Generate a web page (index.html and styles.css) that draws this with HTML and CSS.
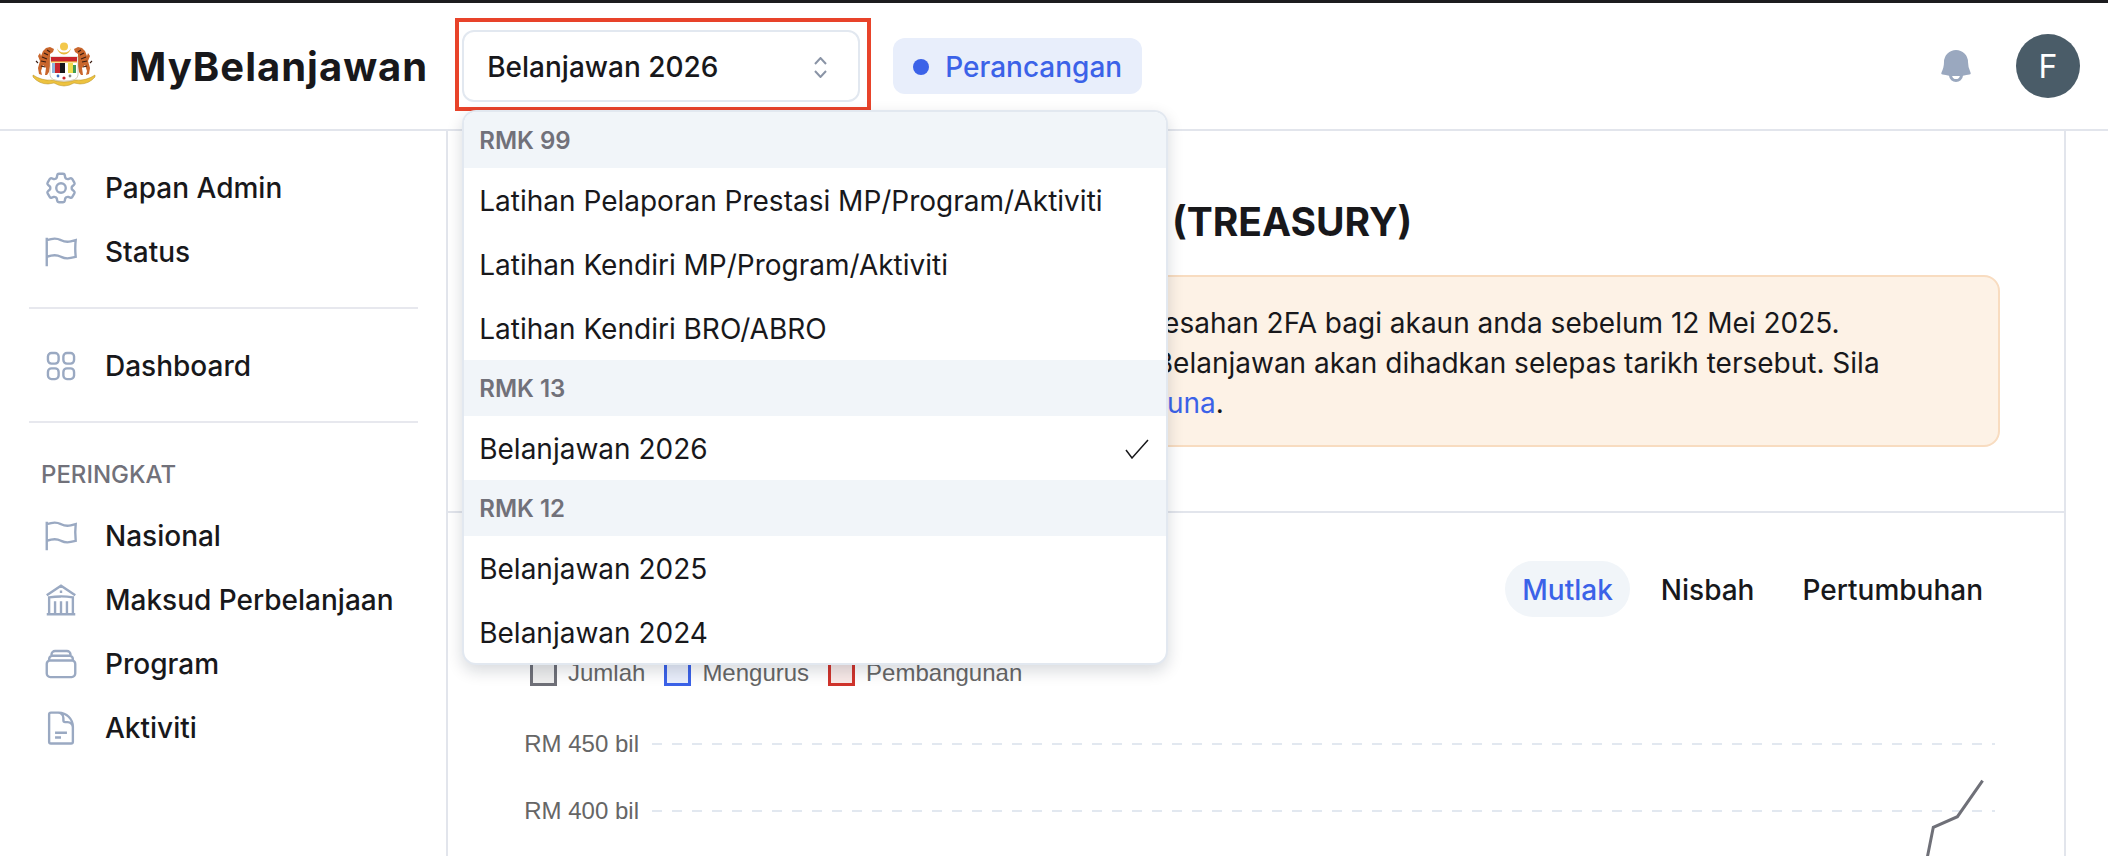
FILE: index.html
```html
<!DOCTYPE html>
<html>
  <head>
    <title>MyBelanjawan</title>
    <link rel="stylesheet" href="styles.css">
  </head>
  <body>
    <header class="topbar">
      <svg class="crest" viewBox="0 0 64 48">
        <defs>
          <g id="tiger">
            <path d="M18 5l4 2-1 3-3 2 0 4 2 3-2 5-1 6-2 3-2 0 1-7-3-3-2 6 1 4-3-1-1-6 2-7-2-5 2-3 1 3 2-5 3-3z" fill="#c9662c"/>
            <path d="M15 8l3 2M12 11l4 2M10 15l5 2M9 19l5 1M9 24l4 1M4 19l2 2" stroke="#3a1d12" stroke-width="1.100" fill="none"/>
          </g>
        </defs>
        <use href="#tiger"/>
        <use href="#tiger" transform="translate(64) scale(-1 1)"/>
        <circle cx="32" cy="4.500" r="4" fill="#f3c84b"/>
        <path d="M25 5a7 7.500 0 0014 0a7 5.500 0 01-14 0z" fill="#e8b93a"/>
        <path d="M18 15h28v18q0 6-14 6t-14-6z" fill="#fff" stroke="#b9a98a" stroke-width=".6"/>
        <rect x="19" y="15" width="26" height="5" fill="#c9252c"/>
        <path d="M19 20h26" stroke="#f3c84b" stroke-width="1.200"/>
        <rect x="20" y="21" width="3" height="10" fill="#8fb6dc"/>
        <rect x="23" y="21" width="5" height="10" fill="#c9252c"/>
        <rect x="28" y="21" width="5" height="10" fill="#17171a"/>
        <rect x="36" y="21" width="5" height="10" fill="#f1dc4e"/>
        <rect x="41" y="23" width="3" height="8" fill="#3f9a55"/>
        <circle cx="26" cy="34" r="1.400" fill="#3d6fc0"/>
        <circle cx="32" cy="36" r="1.600" fill="#c9252c"/>
        <circle cx="38" cy="34" r="1.400" fill="#8a8a80"/>
        <path d="M1 33q9 6 19 5q12 4 24 0q10 1 19-5l0 2q-6 7-15 7l-6-1q-10 6-20 0l-6 1q-9 0-15-7z" fill="#edc23f" stroke="#b58c1d" stroke-width=".5"/>
      </svg>
      <div class="brand">MyBelanjawan</div>

      <div class="select">
        <span>Belanjawan 2026</span>
        <svg class="updown" viewBox="0 0 13 21">
          <path d="M1 7l5.500-6 5.500 6M1 14l5.500 6 5.500-6"/>
        </svg>
        <div class="highlight"></div>
        <div class="menu">
          <div class="menu-group">RMK 99</div>
          <div class="menu-item">Latihan Pelaporan Prestasi MP/Program/Aktiviti</div>
          <div class="menu-item">Latihan Kendiri MP/Program/Aktiviti</div>
          <div class="menu-item">Latihan Kendiri BRO/ABRO</div>
          <div class="menu-group">RMK 13</div>
          <div class="menu-item">
            Belanjawan 2026
            <svg class="check" viewBox="0 0 24 20"><path d="M1 11l6 8L23 1"/></svg>
          </div>
          <div class="menu-group">RMK 12</div>
          <div class="menu-item">Belanjawan 2025</div>
          <div class="menu-item">Belanjawan 2024</div>
        </div>
      </div>

      <div class="badge"><i class="dot"></i>Perancangan</div>

      <svg class="bell" viewBox="0 0 20 20">
        <path d="M10 2a6 6 0 00-6 6c0 1.887-.454 3.665-1.257 5.234a.75.75 0 00.515 1.076 32.91 32.91 0 003.256.508 3.500 3.500 0 006.972 0 32.903 32.903 0 003.256-.508.75.75 0 00.515-1.076A11.448 11.448 0 0116 8a6 6 0 00-6-6zM8.050 14.943a33.540 33.540 0 003.900 0 2 2 0 01-3.900 0z"/>
      </svg>
      <div class="avatar">F</div>
    </header>

    <div class="layout">
      <nav class="sidebar">
        <a class="nav-item">
          <svg viewBox="0 0 24 24"><path d="M9.594 3.940c.090-.542.560-.940 1.110-.940h2.593c.550 0 1.020.398 1.110.940l.213 1.281c.063.374.313.686.645.870.074.040.147.083.220.127.324.196.720.257 1.075.124l1.217-.456a1.125 1.125 0 011.370.490l1.296 2.247a1.125 1.125 0 01-.260 1.431l-1.003.827c-.293.240-.438.613-.431.992a6.759 6.759 0 010 .255c-.007.378.138.750.430.990l1.005.828c.424.350.534.954.260 1.430l-1.298 2.247a1.125 1.125 0 01-1.369.491l-1.217-.456c-.355-.133-.750-.072-1.076.124a6.570 6.570 0 01-.220.128c-.331.183-.581.495-.644.869l-.213 1.280c-.090.543-.560.941-1.110.941h-2.594c-.550 0-1.020-.398-1.110-.940l-.213-1.281c-.062-.374-.312-.686-.644-.870a6.520 6.520 0 01-.220-.127c-.325-.196-.720-.257-1.076-.124l-1.217.456a1.125 1.125 0 01-1.369-.490l-1.297-2.247a1.125 1.125 0 01.260-1.431l1.004-.827c.292-.240.437-.613.430-.992a6.932 6.932 0 010-.255c.007-.378-.138-.750-.430-.990l-1.004-.828a1.125 1.125 0 01-.260-1.430l1.297-2.247a1.125 1.125 0 011.370-.491l1.216.456c.356.133.751.072 1.076-.124.072-.044.146-.087.220-.128.332-.183.582-.495.644-.869l.214-1.281z"/><path d="M15 12a3 3 0 11-6 0 3 3 0 016 0z"/></svg>
          Papan Admin
        </a>
        <a class="nav-item">
          <svg viewBox="0 0 24 24"><path d="M3 3v1.500M3 21v-6m0 0l2.770-.693a9 9 0 016.208.682l.108.054a9 9 0 006.086.710l3.114-.732a48.524 48.524 0 01-.005-10.499l-3.110.732a9 9 0 01-6.085-.711l-.108-.054a9 9 0 00-6.208-.682L3 4.500M3 15V4.500"/></svg>
          Status
        </a>
        <hr class="divider">
        <a class="nav-item">
          <svg viewBox="0 0 24 24"><path d="M3.750 6A2.250 2.250 0 016 3.750h2.250A2.250 2.250 0 0110.500 6v2.250a2.250 2.250 0 01-2.250 2.250H6a2.250 2.250 0 01-2.250-2.250V6zM3.750 15.750A2.250 2.250 0 016 13.500h2.250a2.250 2.250 0 012.250 2.250V18a2.250 2.250 0 01-2.250 2.250H6A2.250 2.250 0 013.750 18v-2.250zM13.500 6a2.250 2.250 0 012.250-2.250H18A2.250 2.250 0 0120.250 6v2.250A2.250 2.250 0 0118 10.500h-2.250a2.250 2.250 0 01-2.250-2.250V6zM13.500 15.750a2.250 2.250 0 012.250-2.250H18a2.250 2.250 0 012.250 2.250V18A2.250 2.250 0 0118 20.250h-2.250A2.250 2.250 0 0113.500 18v-2.250z"/></svg>
          Dashboard
        </a>
        <hr class="divider">
        <div class="nav-label">PERINGKAT</div>
        <a class="nav-item">
          <svg viewBox="0 0 24 24"><path d="M3 3v1.500M3 21v-6m0 0l2.770-.693a9 9 0 016.208.682l.108.054a9 9 0 006.086.710l3.114-.732a48.524 48.524 0 01-.005-10.499l-3.110.732a9 9 0 01-6.085-.711l-.108-.054a9 9 0 00-6.208-.682L3 4.500M3 15V4.500"/></svg>
          Nasional
        </a>
        <a class="nav-item">
          <svg viewBox="0 0 24 24"><path d="M12 21v-8.250M15.750 21v-8.250M8.250 21v-8.250M3 9l9-6 9 6m-1.500 12V10.332A48.360 48.360 0 0012 9.750c-2.551 0-5.056.200-7.500.582V21M3 21h18M12 6.750h.008v.008H12V6.750z"/></svg>
          Maksud Perbelanjaan
        </a>
        <a class="nav-item">
          <svg viewBox="0 0 24 24"><path d="M6 6.878V6a2.250 2.250 0 012.250-2.250h7.500A2.250 2.250 0 0118 6v.878m-12 0c.235-.083.487-.128.750-.128h10.500c.263 0 .515.045.750.128m-12 0A2.250 2.250 0 004.500 9v.878m13.500-3A2.250 2.250 0 0119.500 9v.878m0 0a2.246 2.246 0 00-.750-.128H5.250c-.263 0-.515.045-.750.128m15 0A2.250 2.250 0 0121 12v6a2.250 2.250 0 01-2.250 2.250H5.250A2.250 2.250 0 013 18v-6c0-.980.626-1.813 1.500-2.122"/></svg>
          Program
        </a>
        <a class="nav-item">
          <svg viewBox="0 0 24 24"><path d="M19.500 14.250v-2.625a3.375 3.375 0 00-3.375-3.375h-1.500A1.125 1.125 0 0113.500 7.125v-1.500a3.375 3.375 0 00-3.375-3.375H8.250m0 12.750h7.500m-7.500 3H12M10.500 2.250H5.625c-.621 0-1.125.504-1.125 1.125v17.250c0 .621.504 1.125 1.125 1.125h12.750c.621 0 1.125-.504 1.125-1.125V11.250a9 9 0 00-9-9z"/></svg>
          Aktiviti
        </a>
      </nav>

      <main class="content">
        <section class="intro">
          <h1 class="page-title">PERBENDAHARAAN MALAYSIA (TREASURY)</h1>
          <div class="alert">
            <svg class="alert-icon" viewBox="0 0 24 24"><path d="M12 9v4M12 17h.01M10.300 3.900L2.400 18a2 2 0 001.700 3h15.800a2 2 0 001.700-3L13.700 3.900a2 2 0 00-3.400 0z"/></svg>
            <div>
              <p>Sila aktifkan dengan segera tetapan pengesahan 2FA bagi akaun anda sebelum 12 Mei 2025.</p>
              <p>Segala akses pengguna untuk sistem MyBelanjawan akan dihadkan selepas tarikh tersebut. Sila</p>
              <p>lihat kepada buku panduan <a class="link">manual pengguna</a>.</p>
            </div>
          </div>
        </section>

        <section class="overview">
          <div class="tabs">
            <span class="tab active">Mutlak</span>
            <span class="tab">Nisbah</span>
            <span class="tab">Pertumbuhan</span>
          </div>
          <div class="legend">
            <span class="legend-item"><i class="swatch swatch-total"></i>Jumlah</span>
            <span class="legend-item"><i class="swatch swatch-opex"></i>Mengurus</span>
            <span class="legend-item"><i class="swatch swatch-dev"></i>Pembangunan</span>
          </div>
          <svg class="chart" viewBox="0 0 1488 180">
            <line class="grid" x1="140" y1="45" x2="1483" y2="45"/>
            <line class="grid" x1="140" y1="112" x2="1483" y2="112"/>
            <text class="tick" x="127" y="53">RM 450 bil</text>
            <text class="tick" x="127" y="120">RM 400 bil</text>
            <polyline class="series" points="1470.600,81.700 1445.400,117.700 1421.300,128.300 1411,180"/>
          </svg>
        </section>
      </main>
    </div>
  </body>
</html>
```

FILE: styles.css
```css
/* base */
body {
    margin: 0;
    height: 856px;
    overflow: hidden;
    background-color: #fff;
    color: #18181b;
    font-family: Inter, "Liberation Sans", sans-serif;
    font-size: 28px;
    font-weight: 500;
    border-top: 3px solid #1c1c1f;
    box-sizing: border-box;
}

/* header */
.topbar {
    display: flex;
    align-items: center;
    height: 126px;
    padding: 0 28px 0 32px;
    border-bottom: 2px solid #e2e5ec;
}

.crest {
    width: 64px;
    height: 48px;
}

.brand {
    margin-left: 33px;
    font-size: 40px;
    font-weight: 700;
    letter-spacing: 1px;
    white-space: nowrap;
}

.select {
    position: relative;
    display: flex;
    align-items: center;
    justify-content: space-between;
    box-sizing: border-box;
    width: 398px;
    height: 72px;
    margin-left: 34px;
    padding: 2px 31px 0 23px;
    border: 2px solid #e2e8f0;
    border-radius: 12px;
}

.updown {
    width: 13px;
    height: 21px;
    fill: none;
    stroke: #8a94a6;
    stroke-width: 2;
}

/* red annotation round the select */
.highlight {
    position: absolute;
    top: -14px;
    left: -9px;
    width: 408px;
    height: 85px;
    border: 4px solid #e8432a;
}

.menu {
    position: absolute;
    top: 78px;
    left: -2px;
    z-index: 2;
    box-sizing: border-box;
    width: 706px;
    height: 555px;
    overflow: hidden;
    background-color: #fff;
    border: 2px solid #e2e8f0;
    border-radius: 14px;
    box-shadow: 0 6px 16px rgba(15, 23, 42, 0.16);
}

.menu-group {
    display: flex;
    align-items: center;
    height: 56px;
    padding: 0 15px;
    background-color: #f1f5f9;
    color: #71717a;
    font-size: 24px;
    font-weight: 600;
}

.menu-item {
    display: flex;
    align-items: center;
    justify-content: space-between;
    box-sizing: border-box;
    height: 64px;
    padding: 2px 17px 0 15px;
    font-weight: 400;
    white-space: nowrap;
}

.check {
    width: 24px;
    height: 20px;
    fill: none;
    stroke: #18181b;
    stroke-width: 1.500;
}

.badge {
    display: flex;
    align-items: center;
    box-sizing: border-box;
    width: 249px;
    height: 56px;
    margin-left: 33px;
    padding: 2px 0 0 20px;
    background-color: #e8eefb;
    border-radius: 12px;
    color: #3b62e8;
}

.dot {
    width: 16px;
    height: 16px;
    margin-right: 16px;
    background-color: #3b62e8;
    border-radius: 50%;
}

.bell {
    width: 40px;
    height: 40px;
    margin-left: auto;
    fill: #9aa8bf;
}

.avatar {
    display: flex;
    align-items: center;
    justify-content: center;
    width: 64px;
    height: 64px;
    margin-left: 40px;
    background-color: #4a5c68;
    border-radius: 50%;
    color: #fff;
    font-size: 32px;
    font-weight: 400;
}

/* page */
.layout {
    display: flex;
}

.sidebar {
    box-sizing: border-box;
    width: 448px;
    padding: 24px 28px 0 29px;
    border-right: 2px solid #e2e5ec;
}

.nav-item {
    display: flex;
    align-items: center;
    gap: 25px;
    box-sizing: border-box;
    height: 64px;
    padding: 2px 0 0 13px;
    white-space: nowrap;
}

.nav-item svg {
    flex: none;
    width: 38px;
    height: 38px;
    fill: none;
    stroke: #9aa9c2;
    stroke-width: 1.500;
}

.divider {
    height: 2px;
    margin: 24px 0;
    background-color: #e7e8ee;
    border: none;
}

.nav-label {
    height: 56px;
    padding-left: 12px;
    color: #71717a;
    font-size: 24px;
    line-height: 56px;
}

.content {
    box-sizing: border-box;
    width: 1618px;
    border-right: 2px solid #e2e5ec;
}

.intro {
    padding: 67px 64px 64px;
    border-bottom: 2px solid #e2e5ec;
}

.page-title {
    margin: 0 0 29px;
    padding-left: 52px;
    font-size: 39px;
    font-weight: 700;
    line-height: 48px;
    white-space: nowrap;
}

.alert {
    display: flex;
    gap: 32px;
    box-sizing: border-box;
    height: 172px;
    padding: 26px 0 0 32px;
    background-color: #fdf2e6;
    border: 2px solid #f8dcc0;
    border-radius: 16px;
    line-height: 40px;
    font-weight: 400;
    white-space: nowrap;
}

.alert-icon {
    flex: none;
    width: 36px;
    height: 36px;
    fill: none;
    stroke: #e08a2e;
    stroke-width: 2;
}

.alert p {
    margin: 0;
}

.link {
    color: #3b62e8;
}

.overview {
    padding: 48px 64px 0;
}

.tabs {
    display: flex;
    justify-content: flex-end;
    gap: 14px;
}

.tab {
    height: 56px;
    padding: 0 17px;
    line-height: 58px;
    border-radius: 28px;
}

.tab.active {
    background-color: #f1f5f9;
    color: #3b62e8;
}

.legend {
    display: flex;
    gap: 19px;
    height: 40px;
    margin-top: 26px;
    padding: 16px 0 0 18px;
    color: #666;
    font-family: "Liberation Sans", sans-serif;
    font-size: 24px;
    font-weight: 400;
}

.legend-item {
    display: flex;
    align-items: flex-start;
    gap: 11px;
    line-height: 28px;
}

.swatch {
    box-sizing: border-box;
    width: 27px;
    height: 27px;
    border: 3px solid;
}

.swatch-total {
    background-color: #eee;
    border-color: #6f7078;
}

.swatch-opex {
    background-color: #e9eefb;
    border-color: #3b62e8;
}

.swatch-dev {
    background-color: #f8e9e7;
    border-color: #d0342c;
}

.chart {
    display: block;
    width: 1488px;
    height: 180px;
}

.grid {
    stroke: #e2e8f0;
    stroke-width: 2;
    stroke-dasharray: 10 10;
}

.tick {
    fill: #666;
    font-family: "Liberation Sans", sans-serif;
    font-size: 24px;
    font-weight: 400;
    text-anchor: end;
}

.series {
    fill: none;
    stroke: #6f7078;
    stroke-width: 3;
}
```
